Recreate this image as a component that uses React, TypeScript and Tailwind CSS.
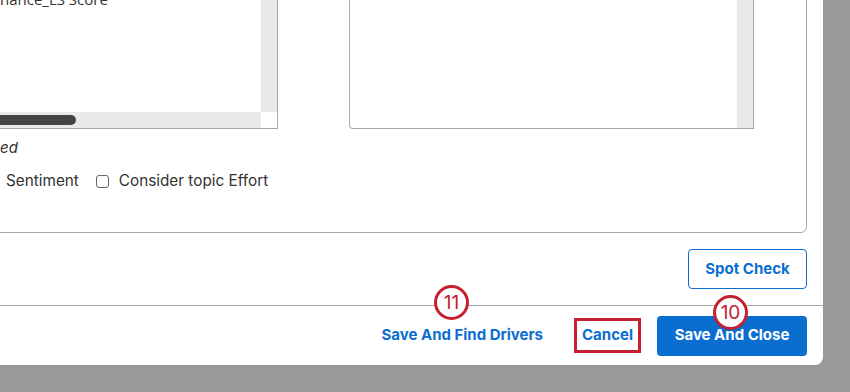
import React from "react";

const inter = { fontFamily: "Inter, 'Noto Sans', sans-serif" };

function Badge({ n, className }: { n: string; className: string }) {
  return (
    <div
      className={`absolute w-[35px] h-[35px] rounded-full border-[3px] border-[#c4202f] bg-white flex items-center justify-center text-[#c4202f] text-[19px] leading-none ${className}`}
      style={inter}
    >
      {n}
    </div>
  );
}

export default function App() {
  return (
    <div className="relative w-[850px] h-[392px] bg-[#999999] overflow-hidden">
      <div className="w-[823px] h-[365px] bg-white rounded-br-[8px] flex flex-col">
        {/* top bordered box */}
        <div className="mt-[-20px] ml-[-20px] w-[827px] h-[253px] shrink-0 border border-[#a8a8a8] rounded-br-[6px] flex flex-col">
          <div className="flex items-start">
            {/* left list */}
            <div className="w-[297px] h-[148px] border-r border-b border-[#a8a8a8] flex">
              <div className="flex-1 flex flex-col">
                <div
                  className="flex-1 pl-[19px] pt-[8px] text-[15px] leading-[20px] text-[#333]"
                  style={{ fontFamily: "'Open Sans', sans-serif" }}
                >
                  nance_LS Score
                </div>
                <div className="h-[16px] bg-[#e9e9e9] pt-[3px]">
                  <div className="w-[95px] h-[10px] rounded-full bg-[#444444]" />
                </div>
              </div>
              <div className="w-[16px] flex flex-col">
                <div className="flex-1 bg-[#e9e9e9]" />
                <div className="h-[16px] bg-white" />
              </div>
            </div>
            {/* right list */}
            <div className="ml-[71px] w-[405px] h-[148px] border-l border-r border-b border-[#a8a8a8] rounded-bl-[4px] flex justify-end">
              <div className="w-[16px] bg-[#e9e9e9]" />
            </div>
          </div>
          <div
            className="mt-[9px] pl-[19px] text-[15px] leading-[20px] italic text-[#333]"
            style={inter}
          >
            ed
          </div>
          <div
            className="mt-[13px] pl-[25px] flex items-center text-[15.3px] leading-[20px] text-[#333]"
            style={inter}
          >
            <span>Sentiment</span>
            <span className="ml-[17px] w-[13px] h-[13px] border border-[#666] rounded-[3px] bg-white" />
            <span className="ml-[10px]">Consider topic Effort</span>
          </div>
        </div>

        {/* spot check */}
        <div className="mt-[16px] pr-[16px] flex justify-end">
          <button
            className="w-[119px] h-[40px] border border-[#0a6ed1] rounded-[4px] text-[#0a6ed1] text-[15px] font-bold bg-white"
            style={inter}
          >
            Spot Check
          </button>
        </div>

        <div className="mt-[16px] h-px bg-[#a8a8a8]" />

        {/* footer */}
        <div className="flex-1 pr-[16px] flex items-center justify-end" style={inter}>
          <button className="px-[16px] h-[40px] text-[#0a6ed1] text-[15px] font-bold">
            Save And Find Drivers
          </button>
          <button className="ml-[15px] w-[67px] h-[35px] border-[3px] border-[#c4202f] text-[#0a6ed1] text-[15px] font-bold flex items-center justify-center">
            Cancel
          </button>
          <button className="ml-[16px] w-[150px] h-[40px] rounded-[4px] bg-[#0a6ed1] text-white text-[15px] font-bold">
            Save And Close
          </button>
        </div>
      </div>

      <Badge n="11" className="left-[434px] top-[285px]" />
      <Badge n="10" className="left-[713px] top-[295px]" />
    </div>
  );
}
